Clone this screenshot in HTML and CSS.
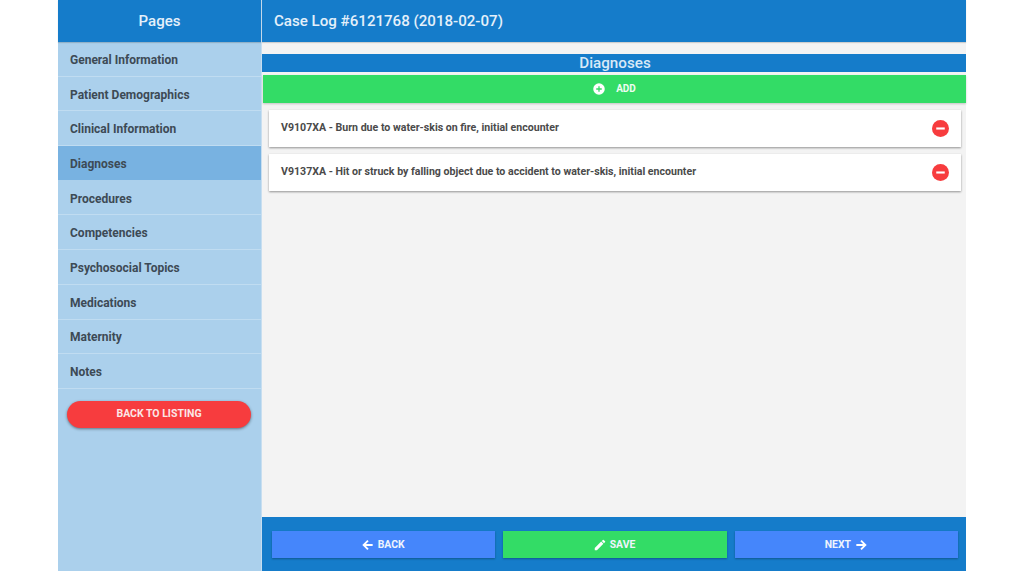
FILE: index.html
```html
<!DOCTYPE html>
<html lang="en">
<head>
<meta charset="utf-8">
<title>Case Log</title>
<link rel="stylesheet" href="styles.css">
</head>
<body>
<div class="app">
  <aside class="sidebar">
    <header class="side-head">Pages</header>
    <nav class="nav">
      <a class="nav-item">General Information</a>
      <a class="nav-item">Patient Demographics</a>
      <a class="nav-item">Clinical Information</a>
      <a class="nav-item active">Diagnoses</a>
      <a class="nav-item">Procedures</a>
      <a class="nav-item">Competencies</a>
      <a class="nav-item">Psychosocial Topics</a>
      <a class="nav-item">Medications</a>
      <a class="nav-item">Maternity</a>
      <a class="nav-item">Notes</a>
    </nav>
    <button class="back-listing">BACK TO LISTING</button>
  </aside>
  <main class="main">
    <header class="main-head">Case Log #6121768 (2018-02-07)</header>
    <section class="content">
      <h2 class="section-title">Diagnoses</h2>
      <button class="add">
        <svg class="icon-add" viewBox="0 0 24 24"><circle cx="12" cy="12" r="11.5" fill="#fff"/><path d="M12 6.5v11M6.5 12h11" stroke="#33dc66" stroke-width="2.6"/></svg>
        <span>ADD</span>
      </button>
      <div class="card">
        <span class="card-text">V9107XA - Burn due to water-skis on fire, initial encounter</span>
        <svg class="icon-remove" viewBox="0 0 24 24"><circle cx="12" cy="12" r="12" fill="#f73c3e"/><path d="M6 12h12" stroke="#fff" stroke-width="3"/></svg>
      </div>
      <div class="card">
        <span class="card-text">V9137XA - Hit or struck by falling object due to accident to water-skis, initial encounter</span>
        <svg class="icon-remove" viewBox="0 0 24 24"><circle cx="12" cy="12" r="12" fill="#f73c3e"/><path d="M6 12h12" stroke="#fff" stroke-width="3"/></svg>
      </div>
    </section>
    <footer class="footer">
      <button class="foot-btn blue shift">
        <svg class="icon-foot" viewBox="0 0 24 24"><path d="M20 12H5M12 4.5 4.5 12l7.5 7.5" fill="none" stroke="#fff" stroke-width="3.2"/></svg>
        <span>BACK</span>
      </button>
      <button class="foot-btn green shift">
        <svg class="icon-foot" viewBox="0 0 24 24"><path d="M3 17.25V21h3.75L17.81 9.94l-3.75-3.75L3 17.25zM20.71 7.04a1 1 0 0 0 0-1.41l-2.34-2.34a1 1 0 0 0-1.41 0l-1.83 1.83 3.75 3.75 1.83-1.83z" fill="#fff"/></svg>
        <span>SAVE</span>
      </button>
      <button class="foot-btn blue">
        <span>NEXT</span>
        <svg class="icon-foot" viewBox="0 0 24 24"><path d="M4 12h15M12 4.5l7.5 7.5-7.5 7.5" fill="none" stroke="#fff" stroke-width="3.2"/></svg>
      </button>
    </footer>
  </main>
</div>
</body>
</html>
```
FILE: styles.css
```css
* { box-sizing: border-box; }
html, body { margin: 0; height: 100%; background: #fff; }
body { font-family: Roboto, "Liberation Sans", sans-serif; overflow: hidden; }
.app { width: 908px; height: 571px; margin-left: 58px; display: flex; }
.sidebar { width: 203px; flex: none; background: #abd0ec; display: flex; flex-direction: column; }
.side-head { height: 42px; background: #157cca; color: #e4f0fa; font-size: 15px; font-weight: 500; display: flex; align-items: center; justify-content: center; box-shadow: 0 1px 1px rgba(0,0,0,.15); }
.nav { display: flex; flex-direction: column; }
.nav-item { height: 34.7px; padding: 2px 12px 0; display: flex; align-items: center; font-size: 12px; font-weight: 700; color: #3d4a55; border-bottom: 1px solid #c0dcf1; }
.nav-item.active { background: #78b2e1; border-bottom-color: #abd0ec; }
.back-listing { margin: 12px 10px 0 9px; height: 27px; border: 0; border-radius: 14px; background: #f73c3e; color: #fbe6e6; font: 700 10.5px Roboto, "Liberation Sans", sans-serif; padding-bottom: 2px; box-shadow: 0 1px 3px rgba(0,0,0,.45); }
.main { flex: 1; min-width: 0; display: flex; flex-direction: column; background: #f3f3f3; border-left: 1px solid #c7def0; }
.main-head { height: 42px; flex: none; background: #157cca; color: #e4f0fa; padding-left: 12px; font-size: 15.1px; font-weight: 500; display: flex; align-items: center; box-shadow: 0 1px 1px rgba(0,0,0,.15); }
.content { flex: 1; min-height: 0; padding-top: 12px; display: flex; flex-direction: column; }
.section-title { margin: 0; height: 18px; padding-left: 2px; flex: none; background: #157cca; color: #d8e9f7; font-size: 15.2px; font-weight: 500; line-height: 19px; text-align: center; }
.add { margin: 3px 0 0 1px; height: 28px; flex: none; border: 0; background: #33dc66; color: #eefcf2; font: 700 10px Roboto, "Liberation Sans", sans-serif; padding-bottom: 2px; display: flex; align-items: center; justify-content: center; gap: 11px; box-shadow: 0 1px 2px rgba(0,0,0,.2); }
.icon-add { width: 12px; height: 12px; }
.card { margin: 7px 5px 0 7px; height: 36.5px; flex: none; background: #fff; display: flex; align-items: center; justify-content: space-between; padding: 0 12px; box-shadow: 0 1px 2px rgba(0,0,0,.4); }
.card + .card { margin-top: 7.5px; }
.card-text { font-size: 10.6px; font-weight: 700; color: #4a4a4a; padding-bottom: 1px; }
.icon-remove { width: 17px; height: 17px; }
.footer { height: 54px; flex: none; background: #157cca; padding: 14px 8px 0 10px; display: flex; gap: 8px; align-items: flex-start; }
.foot-btn { flex: 1 1 0; min-width: 0; height: 27px; padding: 0; border: 0; color: #eef4fd; font: 700 10.4px Roboto, "Liberation Sans", sans-serif; display: flex; align-items: center; justify-content: center; gap: 3px; box-shadow: 0 1px 2px rgba(0,0,0,.3); }
.shift span { margin-right: 2px; }
.blue { background: #4586fb; }
.green { background: #33dc66; }
.icon-foot { width: 14px; height: 14px; }
```
